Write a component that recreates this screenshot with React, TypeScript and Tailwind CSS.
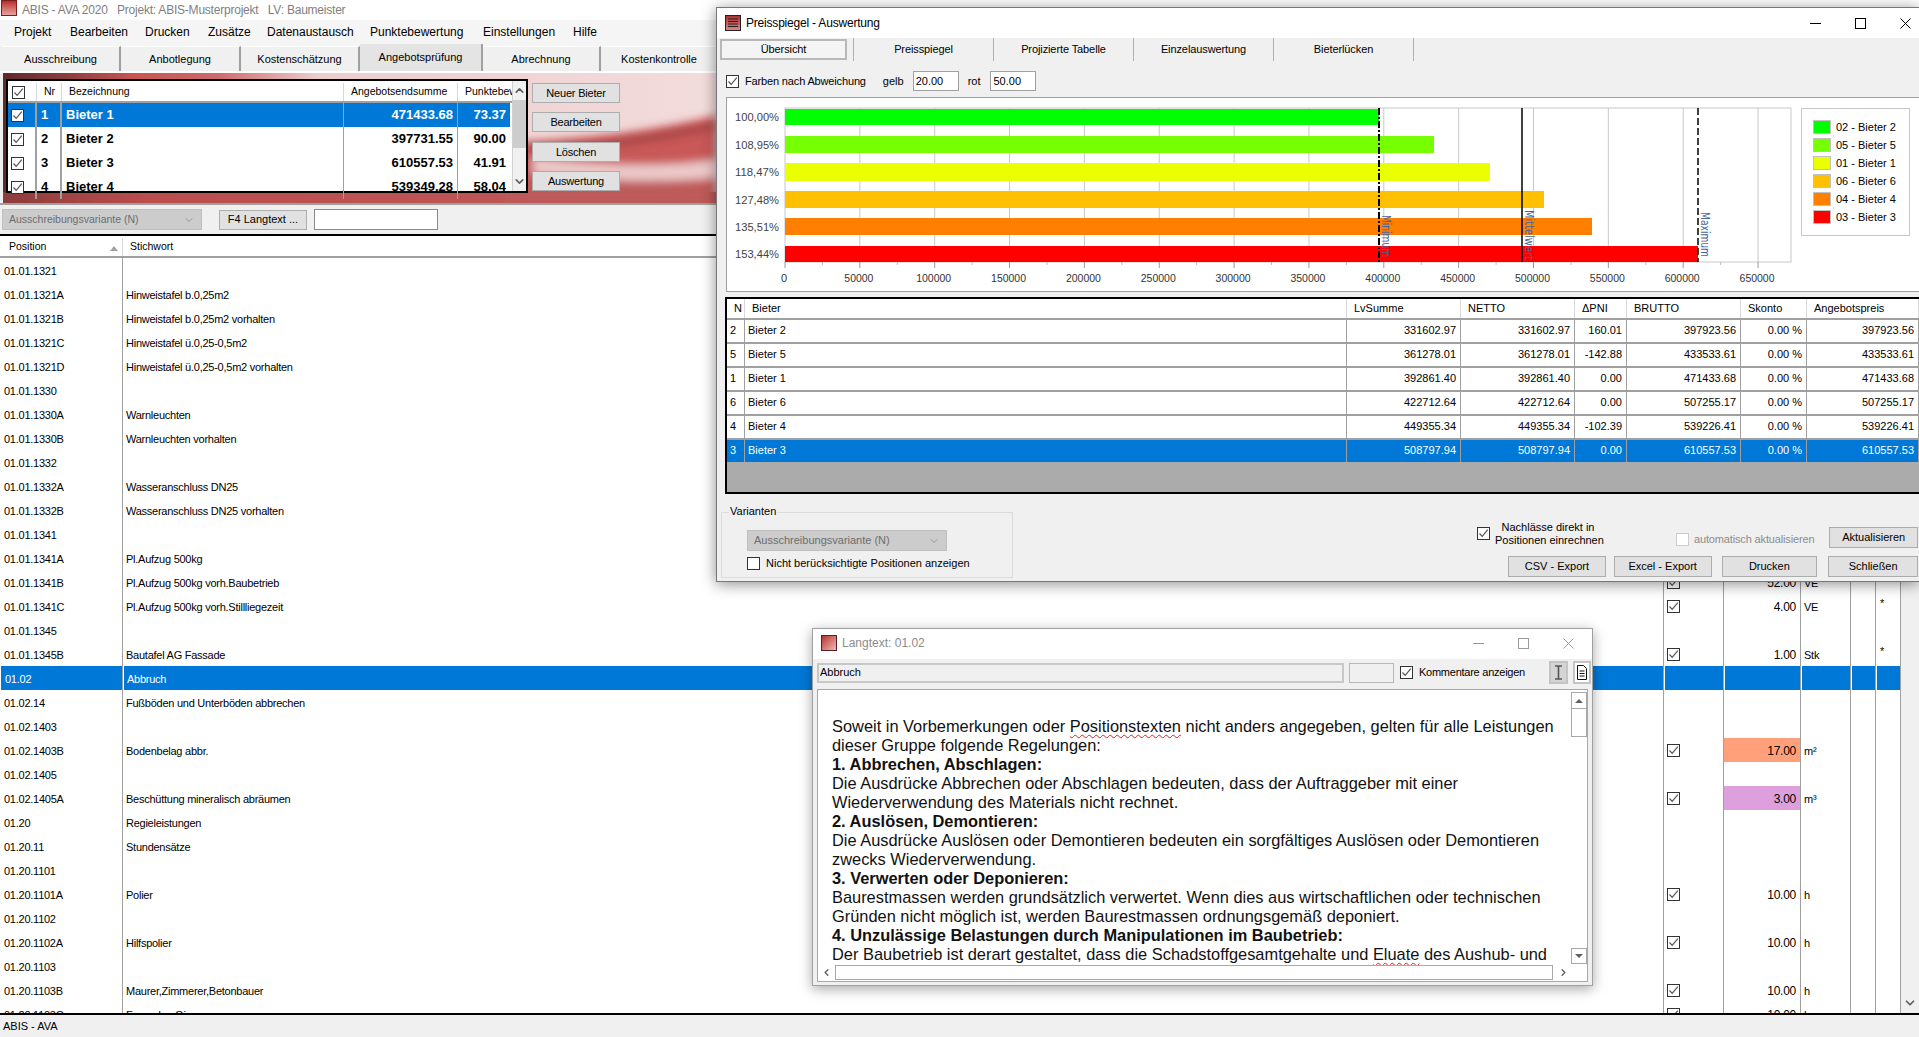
import { ChevronDown, ChevronLeft, ChevronRight, ChevronUp } from "lucide-react";

type ListRow = { pos: string; text?: string; qty?: string; unit?: string; star?: boolean; check?: boolean; fill?: string };

const LIST: ListRow[] = [
  { pos: "01.01.1321" },
  { pos: "01.01.1321A", text: "Hinweistafel b.0,25m2" },
  { pos: "01.01.1321B", text: "Hinweistafel b.0,25m2 vorhalten" },
  { pos: "01.01.1321C", text: "Hinweistafel ü.0,25-0,5m2" },
  { pos: "01.01.1321D", text: "Hinweistafel ü.0,25-0,5m2 vorhalten" },
  { pos: "01.01.1330" },
  { pos: "01.01.1330A", text: "Warnleuchten" },
  { pos: "01.01.1330B", text: "Warnleuchten vorhalten" },
  { pos: "01.01.1332" },
  { pos: "01.01.1332A", text: "Wasseranschluss DN25" },
  { pos: "01.01.1332B", text: "Wasseranschluss DN25 vorhalten" },
  { pos: "01.01.1341" },
  { pos: "01.01.1341A", text: "Pl.Aufzug 500kg" },
  { pos: "01.01.1341B", text: "Pl.Aufzug 500kg vorh.Baubetrieb", qty: "52.00", unit: "VE", check: true },
  { pos: "01.01.1341C", text: "Pl.Aufzug 500kg vorh.Stillliegezeit", qty: "4.00", unit: "VE", star: true, check: true },
  { pos: "01.01.1345" },
  { pos: "01.01.1345B", text: "Bautafel AG Fassade", qty: "1.00", unit: "Stk", star: true, check: true },
  { pos: "01.02", text: "Abbruch" },
  { pos: "01.02.14", text: "Fußböden und Unterböden abbrechen" },
  { pos: "01.02.1403" },
  { pos: "01.02.1403B", text: "Bodenbelag abbr.", qty: "17.00", unit: "m²", check: true, fill: "bg-[#ffa07a]" },
  { pos: "01.02.1405" },
  { pos: "01.02.1405A", text: "Beschüttung mineralisch abräumen", qty: "3.00", unit: "m³", check: true, fill: "bg-[#dda0dd]" },
  { pos: "01.20", text: "Regieleistungen" },
  { pos: "01.20.11", text: "Stundensätze" },
  { pos: "01.20.1101" },
  { pos: "01.20.1101A", text: "Polier", qty: "10.00", unit: "h", check: true },
  { pos: "01.20.1102" },
  { pos: "01.20.1102A", text: "Hilfspolier", qty: "10.00", unit: "h", check: true },
  { pos: "01.20.1103" },
  { pos: "01.20.1103B", text: "Maurer,Zimmerer,Betonbauer", qty: "10.00", unit: "h", check: true },
  { pos: "01.20.1103C", text: "Fassaden Gi", qty: "10.00", unit: "h", check: true },
];

const BIETER = [
  ["1", "Bieter 1", "471433.68", "73.37"],
  ["2", "Bieter 2", "397731.55", "90.00"],
  ["3", "Bieter 3", "610557.53", "41.91"],
  ["4", "Bieter 4", "539349.28", "58.04"],
];

const BARS = [
  { label: "100,00%", y: 109, h: 16, end: 1378, color: "#00ff00" },
  { label: "108,95%", y: 136, h: 17, end: 1433, color: "#76ff00" },
  { label: "118,47%", y: 163, h: 18, end: 1489, color: "#eaff00" },
  { label: "127,48%", y: 191, h: 17, end: 1543, color: "#ffc000" },
  { label: "135,51%", y: 218, h: 17, end: 1591, color: "#ff7f00" },
  { label: "153,44%", y: 246, h: 16, end: 1697, color: "#ff0000" },
];

const LEGEND = [
  ["02 - Bieter 2", "bg-[#00ff00]"],
  ["05 - Bieter 5", "bg-[#76ff00]"],
  ["01 - Bieter 1", "bg-[#eaff00]"],
  ["06 - Bieter 6", "bg-[#ffc000]"],
  ["04 - Bieter 4", "bg-[#ff7f00]"],
  ["03 - Bieter 3", "bg-[#ff0000]"],
];

const PREISE = [
  ["2", "Bieter 2", "331602.97", "331602.97", "160.01", "397923.56", "0.00 %", "397923.56"],
  ["5", "Bieter 5", "361278.01", "361278.01", "-142.88", "433533.61", "0.00 %", "433533.61"],
  ["1", "Bieter 1", "392861.40", "392861.40", "0.00", "471433.68", "0.00 %", "471433.68"],
  ["6", "Bieter 6", "422712.64", "422712.64", "0.00", "507255.17", "0.00 %", "507255.17"],
  ["4", "Bieter 4", "449355.34", "449355.34", "-102.39", "539226.41", "0.00 %", "539226.41"],
  ["3", "Bieter 3", "508797.94", "508797.94", "0.00", "610557.53", "0.00 %", "610557.53"],
];

const PREIS_COLS = ["w-[18px]", "w-[602px]", "w-[114px]", "w-[114px]", "w-[52px]", "w-[114px]", "w-[66px]", "w-[112px]"];
const PREIS_HEAD = ["N", "Bieter", "LvSumme", "NETTO", "ΔPNI", "BRUTTO", "Skonto", "Angebotspreis"];

function Check({ checked = true, disabled = false }: { checked?: boolean; disabled?: boolean }) {
  return (
    <span className={`flex h-[13px] w-[13px] shrink-0 items-center justify-center border bg-white ${disabled ? "border-[#cccccc]" : "border-[#333333]"}`}>
      {checked && (
        <svg width="11" height="11" viewBox="0 0 11 11" fill="none">
          <path d="M1.5 5.5 4.2 8.4 9.8 1.6" stroke="#555555" strokeWidth="1.2" />
        </svg>
      )}
    </span>
  );
}

function Btn({ label, className }: { label: string; className: string }) {
  return (
    <div className={`flex items-center justify-center border border-[#adadad] bg-[#e1e1e1] text-black ${className}`}>
      {label}
    </div>
  );
}

function WinControls({ color, gap }: { color: string; gap: string }) {
  return (
    <div className={`flex items-center ${gap}`}>
      <svg width="11" height="11" viewBox="0 0 11 11"><path d="M0 5.5h11" stroke={color} /></svg>
      <svg width="11" height="11" viewBox="0 0 11 11" fill="none"><rect x=".5" y=".5" width="10" height="10" stroke={color} /></svg>
      <svg width="11" height="11" viewBox="0 0 11 11"><path d="M.5.5l10 10M10.5.5l-10 10" stroke={color} /></svg>
    </div>
  );
}

function RedPanelArt() {
  return (
    <svg className="absolute inset-0 h-full w-full" viewBox="0 0 713 129" preserveAspectRatio="none">
      <defs>
        <linearGradient id="top" x1="0" x2="1" y1="0" y2="0">
          <stop offset="0" stopColor="#5e2a2a" />
          <stop offset=".09" stopColor="#8d3d3d" />
          <stop offset=".18" stopColor="#c85353" />
          <stop offset=".3" stopColor="#cf6a6a" />
          <stop offset=".44" stopColor="#edcccc" />
          <stop offset="1" stopColor="#f3dcdc" />
        </linearGradient>
        <linearGradient id="low" x1="0" x2="1" y1="0" y2="0">
          <stop offset="0" stopColor="#8c3c3c" />
          <stop offset=".2" stopColor="#bb4d4d" />
          <stop offset="1" stopColor="#c05a5a" />
        </linearGradient>
        <filter id="soft"><feGaussianBlur stdDeviation="4" /></filter>
      </defs>
      <rect width="713" height="129" fill="url(#top)" />
      <rect y="118" width="713" height="11" fill="url(#low)" />
      <g filter="url(#soft)">
        <path d="M500 70 C570 66 640 60 713 42 L713 112 C640 108 580 112 500 118Z" fill="#c95858" />
        <path d="M530 84 C600 92 660 94 713 86 L713 104 C650 110 590 106 530 100Z" fill="#eccaca" />
        <path d="M500 116 C590 104 660 108 713 112 L713 129 L500 129Z" fill="#bd5a5a" />
      </g>
      <path d="M525 72 C600 72 660 60 713 50 L713 54 C660 66 600 76 525 76Z" fill="#8a3535" opacity=".8" filter="url(#soft)" />
    </svg>
  );
}

function MainList() {
  return (
    <div className="h-[755px] overflow-hidden bg-white text-[11px] tracking-[-0.25px]">
      {LIST.map((r) => {
        const sel = r.pos === "01.02";
        const cell = `h-full shrink-0 border-r border-[#a0a0a0] ${sel ? "border-l border-l-white bg-[#0078d7]" : ""}`;
        return (
          <div key={r.pos} className={`flex h-[24px] items-center ${sel ? "text-white" : "text-black"}`}>
            <div className={`flex w-[123px] items-center pl-[4px] pt-[2px] ${cell}`}>{r.pos}</div>
            <div className={`flex w-[1541px] items-center pl-[3px] pt-[2px] ${cell}`}>{r.text}</div>
            <div className={`flex w-[60px] items-center pl-[3px] ${cell}`}>{r.check && <Check />}</div>
            <div className={`w-[77px] ${cell}`}>
              <div className={`flex h-full items-center justify-end pr-[4px] pt-[2px] text-[12px] ${r.fill ?? ""}`}>{r.qty}</div>
            </div>
            <div className={`flex w-[50px] items-center pl-[3px] pt-[2px] ${cell}`}>{r.unit}</div>
            <div className={`w-[25px] ${cell}`} />
            <div className={`w-[25px] pl-[4px] leading-[18px] ${cell}`}>{r.star ? "*" : ""}</div>
          </div>
        );
      })}
    </div>
  );
}

function MainWindow() {
  return (
    <div className="flex h-[1037px] w-[1919px] flex-col bg-[#f0f0f0] text-[11px]">
      <div className="flex h-[20px] items-center bg-white text-[#7f7f7f]">
        <span className="ml-px h-[16px] w-[16px] self-start border border-[#7a2020] bg-gradient-to-b from-[#b92a2a] to-[#e8a0a0]" />
        <span className="ml-[5px] whitespace-pre text-[12px] tracking-[-0.22px]">ABIS - AVA 2020   Projekt: ABIS-Musterprojekt   LV: Baumeister</span>
      </div>

      <div className="flex h-[26px] items-center bg-[#f5f5f5] pb-[2px] pl-[14px] text-[12px] text-black">
        {[["Projekt", "w-[56px]"], ["Bearbeiten", "w-[75px]"], ["Drucken", "w-[63px]"], ["Zusätze", "w-[59px]"], ["Datenaustausch", "w-[103px]"], ["Punktebewertung", "w-[113px]"], ["Einstellungen", "w-[90px]"], ["Hilfe", "w-[40px]"]].map(([label, w]) => (
          <span key={label} className={w}>{label}</span>
        ))}
      </div>

      <div className="flex h-[27px] items-end border-b-2 border-white bg-[#f0f0f0] pl-[2px]">
        {[["Ausschreibung", "w-[119px]"], ["Anbotlegung", "w-[120px]"], ["Kostenschätzung", "w-[119px]"], ["Angebotsprüfung", "w-[123px]"], ["Abrechnung", "w-[118px]"], ["Kostenkontrolle", "w-[118px]"]].map(([label, w]) => {
          const active = label === "Angebotsprüfung";
          return (
            <div key={label} className={`flex items-center justify-center border-r-2 border-[#a0a0a0] ${w} ${active ? "h-[27px] bg-[#e4e4e4]" : "h-[25px] border-t border-t-white"}`}>
              {label}
            </div>
          );
        })}
      </div>

      <div className="relative ml-[3px] h-[130px] w-[713px] overflow-hidden">
        <RedPanelArt />
        <div className="relative flex pl-[3px] pt-[6px]">
          <div className="flex h-[114px] w-[522px] border-2 border-black bg-white">
            <div className="w-[504px] shrink-0">
              <div className="flex h-[22px] items-center border-b-2 border-[#a0a0a0] pt-[2px] text-[10.5px]">
                <div className="flex h-full w-[29px] items-center border-r border-[#d8d8d8] pl-[4px]"><Check /></div>
                <div className="flex h-full w-[25px] items-center border-r border-[#d8d8d8] pl-[7px]">Nr</div>
                <div className="flex h-full w-[282px] items-center border-r border-[#d8d8d8] pl-[7px]">Bezeichnung</div>
                <div className="flex h-full w-[114px] items-center border-r border-[#d8d8d8] pl-[7px]">Angebotsendsumme</div>
                <div className="flex h-full w-[54px] items-center overflow-hidden whitespace-nowrap pl-[7px]">Punktebewertung</div>
              </div>
              {BIETER.map(([nr, name, sum, pts], i) => {
                const sel = i === 0;
                const bg = sel ? "bg-[#0078d7] text-white" : "text-black";
                return (
                  <div key={nr} className="flex h-[24px] items-center text-[13px] font-bold">
                    <div className={`flex h-full w-[29px] items-center border-r-2 border-[#a0a0a0] pl-[3px] ${sel ? "bg-[#0078d7]" : ""}`}><Check /></div>
                    <div className={`flex h-full w-[25px] items-center border-r-2 border-[#a0a0a0] pl-[4px] ${bg}`}>{nr}</div>
                    <div className={`flex h-full w-[282px] items-center border-r border-[#a0a0a0] pl-[4px] ${bg}`}>{name}</div>
                    <div className={`flex h-full w-[114px] items-center justify-end border-r border-[#a0a0a0] pr-[4px] ${bg}`}>{sum}</div>
                    <div className={`flex h-full w-[52px] items-center justify-end pr-[4px] ${bg}`}>{pts}</div>
                  </div>
                );
              })}
            </div>
            <div className="flex w-[16px] flex-col items-center border-l border-[#d0d0d0] bg-[#f0f0f0] py-[3px]">
              <ChevronUp size={13} strokeWidth={3} color="#606060" />
              <div className="mt-[3px] h-[48px] w-full bg-[#cdcdcd]" />
              <div className="flex-1" />
              <ChevronDown size={13} strokeWidth={3} color="#606060" />
            </div>
          </div>
          <div className="ml-[4px] mt-[4px] flex w-[88px] flex-col text-[11px] tracking-[-0.2px]">
            <Btn label="Neuer Bieter" className="h-[20px]" />
            <Btn label="Bearbeiten" className="mt-[9px] h-[20px]" />
            <Btn label="Löschen" className="mt-[10px] h-[20px]" />
            <Btn label="Auswertung" className="mt-[9px] h-[20px]" />
          </div>
        </div>
      </div>

      <div className="flex h-[33px] items-center border-t-2 border-[#a0a0a0] border-b-2 border-b-black pl-[2px]">
        <div className="flex h-[21px] w-[200px] items-center justify-between border border-[#bfbfbf] bg-[#cccccc] px-[6px] text-[10.5px] text-[#6d6d6d]">
          Ausschreibungsvariante (N)
          <ChevronDown size={12} color="#9a9a9a" />
        </div>
        <Btn label="F4 Langtext ..." className="ml-[17px] h-[20px] w-[88px]" />
        <div className="ml-[7px] h-[21px] w-[124px] border border-[#8a8a8a] bg-white" />
      </div>

      <div className="flex h-[22px] items-center border-b-2 border-[#a0a0a0] bg-white pt-[2px] text-[10.5px] text-black">
        <div className="relative flex h-full w-[123px] items-center border-r border-[#d8d8d8] pl-[9px]">
          Position
          <span className="absolute right-[4px] top-[8px] h-0 w-0 border-x-[4px] border-b-[5px] border-x-transparent border-b-[#a0a0a0]" />
        </div>
        <div className="pl-[7px]">Stichwort</div>
      </div>

      <div className="flex">
        <div className="w-[1901px]"><MainList /></div>
        <div className="flex h-[755px] w-[18px] flex-col items-center justify-end bg-[#f0f0f0] pb-[3px]">
          <ChevronDown size={14} strokeWidth={3} color="#606060" />
        </div>
      </div>

      <div className="flex flex-1 items-center border-t-2 border-black pl-[3px] text-black">ABIS - AVA</div>
    </div>
  );
}

function PriceChart() {
  const X0 = 726;
  const Y0 = 98;
  const step = 74.85;
  const ticks = Array.from({ length: 14 }, (_, i) => i);
  return (
    <svg width="1074" height="193" viewBox={`${X0} ${Y0} 1074 193`} className="shrink-0" fontFamily="Liberation Sans, sans-serif">
      <rect x="784" y="108" width="1006" height="154" fill="#fff" stroke="#c8c8c8" />
      {ticks.map((i) => (
        <g key={i}>
          {i > 0 && <line x1={784 + i * step} x2={784 + i * step} y1="108" y2="262" stroke="#c8c8c8" />}
          <line x1={784 + i * step} x2={784 + i * step} y1="262" y2="268" stroke="#999" />
          {i < 13 && <line x1={784 + (i + 0.5) * step} x2={784 + (i + 0.5) * step} y1="262" y2="265" stroke="#bbb" />}
          <text x={783 + i * step} y="282" textAnchor="middle" fontSize="11" fill="#333" textLength={i === 0 ? undefined : i < 2 ? 29 : 35} lengthAdjust="spacingAndGlyphs">
            {i * 50000}
          </text>
        </g>
      ))}
      {BARS.map((b) => (
        <g key={b.label}>
          <rect x="784" y={b.y} width={b.end - 784} height={b.h} fill={b.color} />
          <text x="734" y={b.y + b.h / 2 + 4} fontSize="11" fill="#444" textLength="44" lengthAdjust="spacingAndGlyphs">{b.label}</text>
        </g>
      ))}
      <line x1="1378" x2="1378" y1="108" y2="262" stroke="#000" strokeWidth="2" strokeDasharray="7 2 2 2" />
      <line x1="1521" x2="1521" y1="108" y2="262" stroke="#000" strokeWidth="1.5" />
      <line x1="1697" x2="1697" y1="108" y2="262" stroke="#000" strokeWidth="1.5" strokeDasharray="7 3" />
      {[["Minimum", 1381, 215, 42], ["Mittelwert", 1524, 210, 50], ["Maximum", 1700, 212, 45]].map(([t, x, y, len]) => (
        <text key={t as string} x={x} y={y} transform={`rotate(90 ${x} ${y})`} fontSize="12" fill="#44659f" fontFamily="DejaVu Sans, sans-serif" textLength={len as number} lengthAdjust="spacingAndGlyphs">
          {t}
        </text>
      ))}
    </svg>
  );
}

function PreisWindow() {
  return (
    <div className="absolute left-[716px] top-[7px] flex h-[575px] w-[1203px] flex-col border border-r-0 border-[#777777] bg-[#f0f0f0] text-[11px] text-black shadow-[0_2px_14px_rgba(0,0,0,0.45)]">
      <div className="flex h-[30px] shrink-0 items-center justify-between bg-white pl-[8px] pr-[8px]">
        <div className="flex items-center">
          <svg width="16" height="16" viewBox="0 0 16 16">
            <defs><linearGradient id="ic" x1="0" x2="0" y1="0" y2="1"><stop offset="0" stopColor="#a83030" /><stop offset="1" stopColor="#e08a8a" /></linearGradient></defs>
            <rect x=".5" y=".5" width="15" height="15" fill="url(#ic)" stroke="#222" />
            <path d="M3 4h10M3 6.5h10M3 9h10M3 11.5h10" stroke="#222" strokeWidth="1.2" />
          </svg>
          <span className="ml-[5px] text-[12px] tracking-[-0.2px]">Preisspiegel - Auswertung</span>
        </div>
        <WinControls color="#000" gap="gap-[34px]" />
      </div>

      <div className="flex h-[24px] shrink-0 pb-[1px] pl-[3px] tracking-[-0.1px]">
        <div className="mt-px flex h-[21px] w-[127px] items-center justify-center border-2 border-[#b8b8b8] bg-[#f4f4f4]">Übersicht</div>
        {["Preisspiegel", "Projizierte Tabelle", "Einzelauswertung", "Bieterlücken"].map((t, i) => (
          <div key={t} className={`flex h-full items-center justify-center border-r border-[#b0b0b0] ${i === 0 ? "ml-[6px] w-[141px] border-l" : "w-[140px]"}`}>{t}</div>
        ))}
      </div>

      <div className="mt-[9px] flex h-[20px] shrink-0 items-center pl-[9px]">
        <Check />
        <span className="ml-[6px] tracking-[-0.15px]">Farben nach Abweichung</span>
        <span className="ml-[17px]">gelb</span>
        <div className="ml-[9px] flex h-[20px] w-[46px] items-center border border-[#a0a0a0] bg-white pl-[2px]">20.00</div>
        <span className="ml-[9px]">rot</span>
        <div className="ml-[10px] flex h-[20px] w-[46px] items-center border border-[#a0a0a0] bg-white pl-[2px]">50.00</div>
      </div>

      <div className="ml-[9px] mt-[6px] flex h-[195px] shrink-0 border-y border-l border-[#a0a0a0] bg-white">
        <PriceChart />
        <div className="mt-[10px] flex h-[128px] w-[109px] flex-col gap-[4px] border border-[#c8c8c8] pl-[11px] pt-[11px]">
          {LEGEND.map(([t, c]) => (
            <div key={t} className="flex h-[14px] items-center whitespace-nowrap">
              <span className={`h-[14px] w-[18px] border border-[#c0c0c0] ${c}`} />
              <span className="ml-[5px]">{t}</span>
            </div>
          ))}
        </div>
      </div>

      <div className="ml-[8px] mt-[5px] flex h-[197px] shrink-0 flex-col border-y-2 border-l-2 border-black bg-[#ababab]">
        <div className="flex h-[19px] shrink-0 bg-white">
          {PREIS_HEAD.map((h, i) => (
            <div key={h} className={`flex items-center overflow-hidden whitespace-nowrap border-r border-[#d8d8d8] pl-[7px] ${PREIS_COLS[i]}`}>{h}</div>
          ))}
        </div>
        {PREISE.map((row, r) => {
          const sel = r === 5;
          return (
            <div key={row[0]} className={`flex h-[24px] shrink-0 border-t-2 border-[#a0a0a0] ${sel ? "bg-[#0078d7] text-white" : "bg-white"}`}>
              {row.map((v, i) => (
                <div key={i} className={`flex items-center border-r border-[#a0a0a0] pb-[2px] ${PREIS_COLS[i]} ${i < 2 ? "pl-[3px]" : "justify-end pr-[4px]"}`}>{v}</div>
              ))}
            </div>
          );
        })}
      </div>

      <div className="flex flex-1">
        <div className="relative ml-[4px] mt-[18px] h-[66px] w-[292px] border border-[#dcdcdc] pl-[25px] pt-[17px]">
          <span className="absolute left-[7px] top-[-8px] bg-[#f0f0f0] px-px leading-[13px]">Varianten</span>
          <div className="flex h-[21px] w-[200px] items-center justify-between border border-[#bfbfbf] bg-[#cccccc] px-[6px] text-[#6d6d6d]">
            Ausschreibungsvariante (N)
            <ChevronDown size={12} color="#9a9a9a" />
          </div>
          <div className="mt-[4px] flex items-center">
            <Check checked={false} />
            <span className="ml-[6px]">Nicht berücksichtigte Positionen anzeigen</span>
          </div>
        </div>
        <div className="ml-[464px] mt-[33px] flex w-[441px] flex-col">
          <div className="flex h-[21px]">
            <Check />
            <div className="ml-[5px] mt-[-6px] h-[26px] w-[106px] whitespace-nowrap text-center leading-[13px]">Nachlässe direkt in<br />Positionen einrechnen</div>
            <div className="ml-[75px] mt-[6px] flex h-[13px] w-[140px] items-center tracking-[-0.15px] text-[#8c8c8c]">
              <Check checked={false} disabled />
              <span className="ml-[5px] whitespace-nowrap">automatisch aktualisieren</span>
            </div>
            <Btn label="Aktualisieren" className="ml-[15px] h-[21px] w-[90px]" />
          </div>
          <div className="mt-[8px] flex h-[21px] pl-[31px]">
            <Btn label="CSV - Export" className="w-[98px]" />
            <Btn label="Excel - Export" className="ml-[8px] w-[98px]" />
            <Btn label="Drucken" className="ml-[10px] w-[96px]" />
            <Btn label="Schließen" className="ml-[11px] w-[90px]" />
          </div>
        </div>
      </div>
    </div>
  );
}

function Wavy({ children }: { children: string }) {
  return <span className="underline decoration-[#e02020] decoration-wavy decoration-1 underline-offset-2">{children}</span>;
}

function LangtextWindow() {
  return (
    <div className="absolute left-[812px] top-[628px] flex h-[358px] w-[781px] flex-col border border-[#a0a0a0] bg-[#f0f0f0] text-[12px] text-black shadow-[0_3px_12px_rgba(0,0,0,0.35)]">
      <div className="flex h-[30px] shrink-0 items-center justify-between bg-white pb-[2px] pl-[8px] pr-[18px]">
        <div className="flex items-center">
          <span className="h-[16px] w-[16px] border border-[#5a2020] bg-gradient-to-br from-[#b03030] to-[#eeb8b8]" />
          <span className="ml-[5px] text-[#8c8c8c]">Langtext: 01.02</span>
        </div>
        <WinControls color="#9a9a9a" gap="gap-[34px]" />
      </div>

      <div className="flex h-[30px] shrink-0 items-center pb-[3px] pl-[4px]">
        <div className="flex h-[20px] w-[527px] items-center border-2 border-[#c8c8c8] bg-[#f0f0f0] pl-px text-[11px]">Abbruch</div>
        <div className="ml-[5px] h-[20px] w-[45px] border border-[#b8b8b8]" />
        <span className="ml-[6px]"><Check /></span>
        <span className="ml-[6px] w-[130px] whitespace-nowrap text-[11px] tracking-[-0.25px]">Kommentare anzeigen</span>
        <div className="flex h-[23px] w-[19px] items-center justify-center border-2 border-[#c4c4c4] bg-[#d4d4d4]">
          <svg width="9" height="15" viewBox="0 0 9 15" fill="none"><path d="M1 1h7M1 14h7M4.5 1v13" stroke="#555" strokeWidth="1.6" /></svg>
        </div>
        <div className="ml-[5px] flex h-[23px] w-[18px] items-center justify-center border-2 border-[#c4c4c4] bg-white">
          <svg width="10" height="15" viewBox="0 0 10 15" fill="none"><path d="M.5.5h6l3 3v11H.5zM2.5 6h5M2.5 8.5h5M2.5 11h5" stroke="#111" /></svg>
        </div>
      </div>

      <div className="mx-[4px] flex h-[293px] flex-col border border-[#a8a8a8] bg-white">
        <div className="flex h-[275px] shrink-0">
          <div className="flex-1 overflow-hidden whitespace-nowrap pl-[14px] pt-[27px] text-[16.4px] leading-[19px] text-[#111]">
            <div>Soweit in Vorbemerkungen oder <Wavy>Positionstexten</Wavy> nicht anders angegeben, gelten für alle Leistungen</div>
            <div>dieser Gruppe folgende Regelungen:</div>
            <div className="font-bold">1. Abbrechen, Abschlagen:</div>
            <div>Die Ausdrücke Abbrechen oder Abschlagen bedeuten, dass der Auftraggeber mit einer</div>
            <div>Wiederverwendung des Materials nicht rechnet.</div>
            <div className="font-bold">2. Auslösen, Demontieren:</div>
            <div>Die Ausdrücke Auslösen oder Demontieren bedeuten ein sorgfältiges Auslösen oder Demontieren</div>
            <div>zwecks Wiederverwendung.</div>
            <div className="font-bold">3. Verwerten oder Deponieren:</div>
            <div>Baurestmassen werden grundsätzlich verwertet. Wenn dies aus wirtschaftlichen oder technischen</div>
            <div>Gründen nicht möglich ist, werden Baurestmassen ordnungsgemäß deponiert.</div>
            <div className="font-bold">4. Unzulässige Belastungen durch Manipulationen im Baubetrieb:</div>
            <div>Der Baubetrieb ist derart gestaltet, dass die Schadstoffgesamtgehalte und <Wavy>Eluate</Wavy> des Aushub- und</div>
          </div>
          <div className="flex w-[16px] shrink-0 flex-col pt-[2px]">
            <div className="flex h-[17px] items-center justify-center border border-[#a8a8a8]">
              <span className="h-0 w-0 border-x-[4px] border-b-[4px] border-x-transparent border-b-[#606060]" />
            </div>
            <div className="h-[28px] border border-t-0 border-[#a8a8a8]" />
            <div className="flex-1" />
            <div className="mb-[1px] flex h-[16px] items-center justify-center border border-[#a8a8a8]">
              <span className="h-0 w-0 border-x-[4px] border-t-[4px] border-x-transparent border-t-[#606060]" />
            </div>
          </div>
        </div>
        <div className="flex h-[15px] items-center pl-[1px]">
          <div className="flex h-full w-[14px] items-center justify-center"><ChevronLeft size={11} color="#606060" strokeWidth={3} /></div>
          <div className="ml-[2px] h-full w-[718px] border border-[#a8a8a8]" />
          <div className="ml-[3px] flex h-full w-[15px] items-center justify-center"><ChevronRight size={11} color="#606060" strokeWidth={3} /></div>
        </div>
      </div>
    </div>
  );
}

export default function App() {
  return (
    <div className="relative h-[1037px] w-[1919px] overflow-hidden font-['Liberation_Sans',sans-serif]">
      <MainWindow />
      <PreisWindow />
      <LangtextWindow />
    </div>
  );
}
